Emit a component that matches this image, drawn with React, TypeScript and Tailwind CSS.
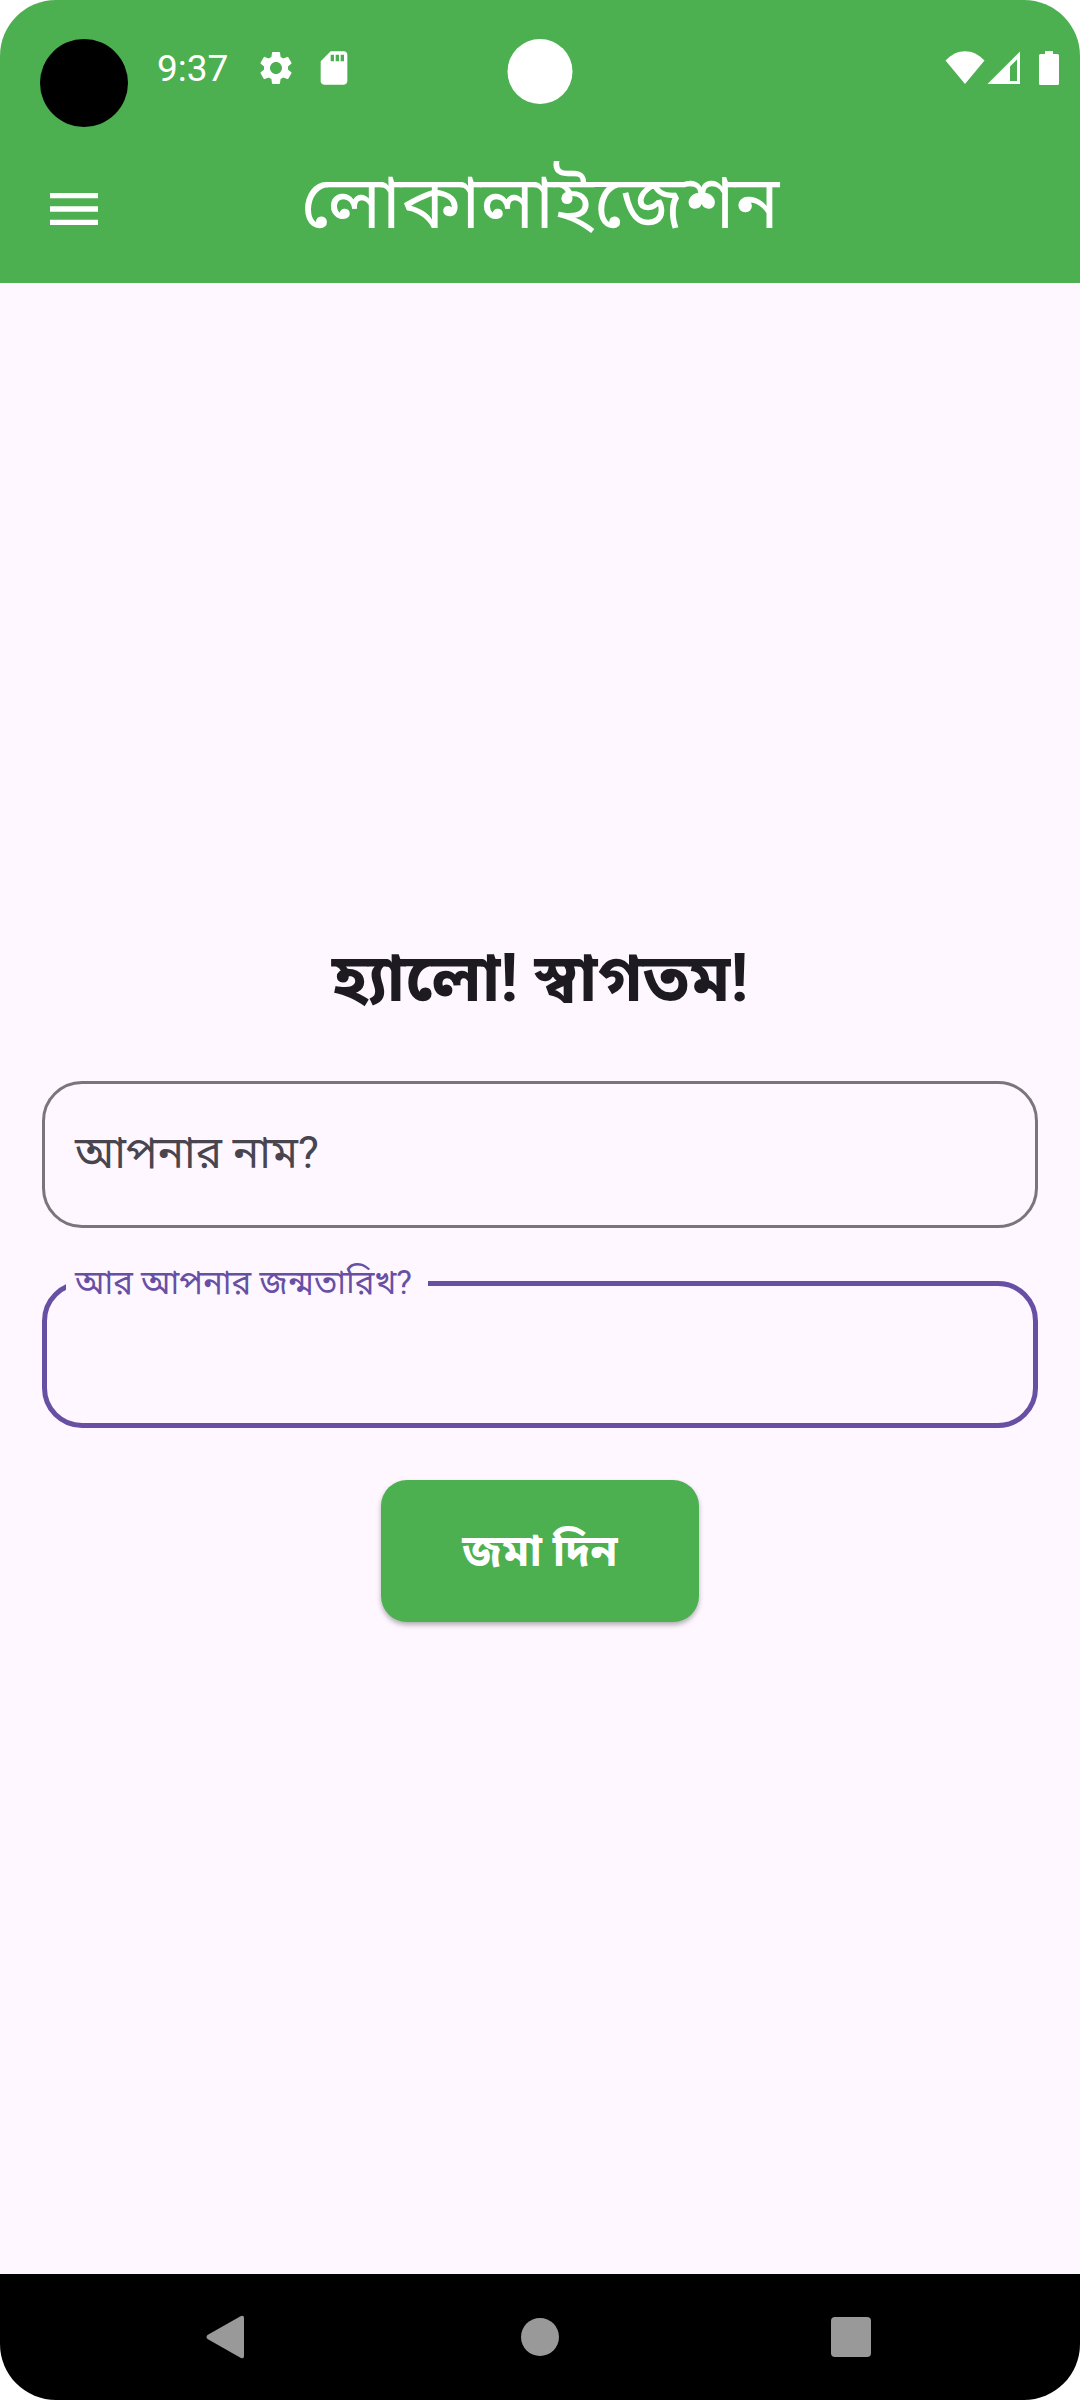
import { MdMenu, MdSdCard, MdSettings } from "react-icons/md";

const sans = "font-['Roboto','Noto_Sans_Bengali','Noto_Sans',sans-serif]";

function StatusBar() {
  return (
    <div className="relative flex items-start justify-between pl-10 pr-[21px] pt-[39px] text-white">
      <div className="flex items-start">
        <span className="size-[88px] rounded-full bg-black" />
        <span className="ml-[29px] mt-2 text-[37px] leading-[44px]">9:37</span>
        <MdSettings className="ml-7 mt-[9px] size-10" />
        <MdSdCard className="ml-[18px] mt-[9px] size-10" />
      </div>
      <span className="absolute left-1/2 size-[65px] -translate-x-1/2 rounded-full bg-white" />
      <div className="mt-3 flex items-start">
        <svg className="h-[34px] w-10" viewBox="0 0 40 34" fill="currentColor" aria-hidden="true">
          <path d="M20 33 0.5 9.500C12 -3 28 -3 39.500 9.500Z" />
        </svg>
        <svg className="ml-0.5 h-[34px] w-[34px]" viewBox="0 0 34 34" fill="currentColor" aria-hidden="true">
          <path fillRule="evenodd" d="M33 0.500V33H0.500ZM30 8.500 23 15.500V30H30Z" />
        </svg>
        <svg className="ml-[18px] h-[34px] w-5" viewBox="0 0 20 34" fill="currentColor" aria-hidden="true">
          <path d="M6 0H14V3H18.500Q20 3 20 4.500V32.500Q20 34 18.500 34H1.500Q0 34 0 32.500V4.500Q0 3 1.500 3H6Z" />
        </svg>
      </div>
    </div>
  );
}

function NavigationBar() {
  return (
    <nav className="grid h-[126px] grid-cols-[1fr_96px_1fr] items-center bg-black px-[148px] text-[#999999]">
      <button type="button" aria-label="Back" className="w-[156px]">
        <svg className="mx-auto h-11 w-10" viewBox="0 0 40 44" fill="currentColor" aria-hidden="true">
          <path d="M1.500 20 34.500 1.300Q38 -0.500 38 3V41Q38 44.500 34.500 42.700L1.500 24Q-0.500 22 1.500 20Z" />
        </svg>
      </button>
      <button type="button" aria-label="Home" className="mx-auto size-[38px] rounded-full bg-[#999999]" />
      <button type="button" aria-label="Overview" className="ml-auto mr-[61px] size-10 rounded bg-[#999999]" />
    </nav>
  );
}

export default function App() {
  return (
    <div className={`${sans} bg-white`}>
      <div className="flex min-h-screen flex-col overflow-hidden rounded-[56px] bg-[#fef7ff]">
        <header className="bg-[#4caf50] text-white">
          <StatusBar />
          <div className="flex h-[156px] items-center px-[42px] pb-1">
            <div className="flex flex-1">
              <button type="button" aria-label="Menu" className="mt-3">
                <MdMenu className="size-16" />
              </button>
            </div>
            <h1 className="text-[74px] leading-[96px]">লোকালাইজেশন</h1>
            <div className="flex-1" />
          </div>
        </header>

        <main className="flex flex-1 flex-col justify-center px-[42px]">
          <form className="flex flex-col items-center" onSubmit={(e) => e.preventDefault()}>
            <h2 className="text-[66px] leading-[88px] font-bold text-[#1d1b20]">হ্যালো! স্বাগতম!</h2>
            <div className="relative mt-[58px] w-full">
              <label htmlFor="name" className="absolute left-[33px] top-[44px] text-[44px] leading-[56px] text-[#49454f]">
                আপনার নাম?
              </label>
              <input id="name" type="text" className="h-[147px] w-full rounded-[40px] border-[3px] border-[#79747e] px-[30px] text-[44px] outline-none" />
            </div>
            <div className="relative mt-[53px] w-full">
              <label htmlFor="birthday" className="absolute -top-[18px] left-6 bg-[#fef7ff] pl-[9px] pr-4 text-[33px] leading-10 text-[#6750a4]">
                আর আপনার জন্মতারিখ?
              </label>
              <input id="birthday" type="text" className="h-[147px] w-full rounded-[40px] border-[5px] border-[#6750a4] px-[28px] text-[44px] outline-none" />
            </div>
            <button type="submit" className="mt-[52px] h-[142px] rounded-[26px] bg-[#4caf50] px-[81px] text-[44px] font-bold text-white shadow-[0_3px_5px_rgba(0,0,0,0.3)]">
              জমা দিন
            </button>
          </form>
        </main>

        <NavigationBar />
      </div>
    </div>
  );
}
